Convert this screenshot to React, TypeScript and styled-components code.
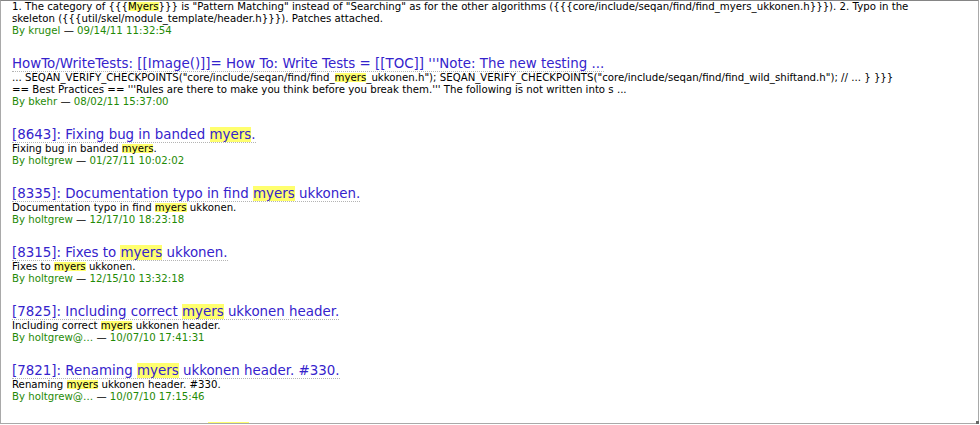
import React, { useLayoutEffect, useRef } from "react";
import styled, { createGlobalStyle } from "styled-components";

const Global = createGlobalStyle`
  html, body { margin: 0; padding: 0; background: #fff; }
  body { font-family: "DejaVu Sans", Verdana, sans-serif; }
`;

const Frame = styled.div`
  position: relative;
  box-sizing: border-box;
  width: 979px;
  height: 424px;
  border: 1px solid #a9a9a9;
  border-top-color: #858585;
  background: #fff;
  &::after {
    content: "";
    position: absolute;
    right: -1px;
    bottom: -1px;
    width: 3px;
    height: 3px;
    background: #666;
  }
`;

const Scroller = styled.div`
  height: 100%;
  overflow: hidden;
`;

const Results = styled.dl`
  margin: 0;
  padding: 0 40px 0 11px;
`;

const Title = styled.dt`
  margin: 0;
  font-size: 13.4px;
  line-height: 15px;
  height: 16px;
  white-space: nowrap;
`;

const TitleLink = styled.a`
  display: inline-block;
  color: #3523cc;
  text-decoration: none;
  border-bottom: 1px dotted #b4b4b4;
`;

const Excerpt = styled.dd`
  margin: 0;
  font-size: 10.2px;
  line-height: 12px;
  color: #000;
`;

const Meta = styled.dd`
  margin: 0 0 19px 0;
  font-size: 10.2px;
  line-height: 12px;
  color: #000;
`;

const Green = styled.span`
  color: #1f8a06;
`;

const Mark = styled.span<{ $big?: boolean }>`
  background: #ffff6e;
  ${(p) => (p.$big ? "" : "display: inline-block; line-height: 9px;")}
`;

type Part = string | { m: string } | { br: true };

const render = (parts: Part[], big?: boolean) =>
  parts.map((p, i) => {
    if (typeof p === "string") return <React.Fragment key={i}>{p}</React.Fragment>;
    if ("br" in p) return <br key={i} />;
    return (
      <Mark key={i} $big={big}>
        {p.m}
      </Mark>
    );
  });

type Item = {
  title: Part[];
  excerpt: Part[];
  author: string;
  date: string;
};

const items: Item[] = [
  {
    title: ["#547: Wrong category for ", { m: "Myers" }, " and typo in skeleton"],
    excerpt: [
      "1. The category of {{{",
      { m: "Myers" },
      '}}} is "Pattern Matching" instead of "Searching" as for the other algorithms ({{{core/include/seqan/find/find_myers_ukkonen.h}}}). 2. Typo in the',
      { br: true },
      "skeleton ({{{util/skel/module_template/header.h}}}). Patches attached.",
    ],
    author: "krugel",
    date: "09/14/11 11:32:54",
  },
  {
    title: [
      "HowTo/WriteTests: [[Image()]]= How To: Write Tests = [[TOC]] '''Note: The new testing ...",
    ],
    excerpt: [
      '... SEQAN_VERIFY_CHECKPOINTS("core/include/seqan/find/find_',
      { m: "myers" },
      '_ukkonen.h"); SEQAN_VERIFY_CHECKPOINTS("core/include/seqan/find/find_wild_shiftand.h"); // ... } }}}',
      { br: true },
      "== Best Practices == '''Rules are there to make you think before you break them.''' The following is not written into s ...",
    ],
    author: "bkehr",
    date: "08/02/11 15:37:00",
  },
  {
    title: ["[8643]: Fixing bug in banded ", { m: "myers" }, "."],
    excerpt: ["Fixing bug in banded ", { m: "myers" }, "."],
    author: "holtgrew",
    date: "01/27/11 10:02:02",
  },
  {
    title: ["[8335]: Documentation typo in find ", { m: "myers" }, " ukkonen."],
    excerpt: ["Documentation typo in find ", { m: "myers" }, " ukkonen."],
    author: "holtgrew",
    date: "12/17/10 18:23:18",
  },
  {
    title: ["[8315]: Fixes to ", { m: "myers" }, " ukkonen."],
    excerpt: ["Fixes to ", { m: "myers" }, " ukkonen."],
    author: "holtgrew",
    date: "12/15/10 13:32:18",
  },
  {
    title: ["[7825]: Including correct ", { m: "myers" }, " ukkonen header."],
    excerpt: ["Including correct ", { m: "myers" }, " ukkonen header."],
    author: "holtgrew@…",
    date: "10/07/10 17:41:31",
  },
  {
    title: ["[7821]: Renaming ", { m: "myers" }, " ukkonen header. #330."],
    excerpt: ["Renaming ", { m: "myers" }, " ukkonen header. #330."],
    author: "holtgrew@…",
    date: "10/07/10 17:15:46",
  },
  {
    title: ["[7815]: Adding new tests for ", { m: "myers" }, " ukkonen."],
    excerpt: ["Adding new tests for ", { m: "myers" }, " ukkonen."],
    author: "holtgrew@…",
    date: "10/07/10 16:02:11",
  },
];

export default function App() {
  const ref = useRef<HTMLDivElement>(null);
  useLayoutEffect(() => {
    if (ref.current) ref.current.scrollTop = 16;
  }, []);
  return (
    <>
      <Global />
      <Frame>
        <Scroller ref={ref}>
          <Results>
            {items.map((it, i) => (
              <React.Fragment key={i}>
                <Title>
                  <TitleLink href="#">{render(it.title, true)}</TitleLink>
                </Title>
                <Excerpt>{render(it.excerpt)}</Excerpt>
                <Meta>
                  <Green>By {it.author}</Green> — <Green>{it.date}</Green>
                </Meta>
              </React.Fragment>
            ))}
          </Results>
        </Scroller>
      </Frame>
    </>
  );
}
